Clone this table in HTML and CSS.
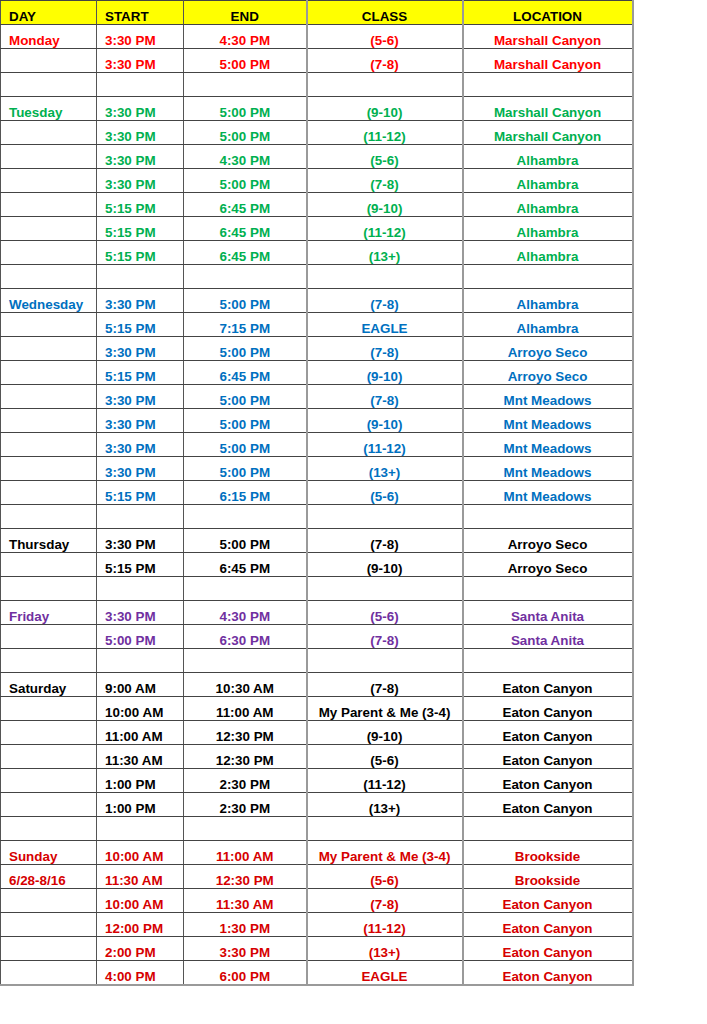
FILE: index.html
```html
<!DOCTYPE html>
<html>
<head>
<meta charset="utf-8">
<link rel="stylesheet" href="styles.css">
</head>
<body>
<table class="sched">
<colgroup><col class="c1"><col class="c2"><col class="c3"><col class="c4"><col class="c5"></colgroup>
<thead>
<tr class="head"><th class="l">DAY</th><th class="l">START</th><th>END</th><th>CLASS</th><th>LOCATION</th></tr>
</thead>
<tbody>
<tr class="red"><td class="l">Monday</td><td class="l">3:30 PM</td><td>4:30 PM</td><td>(5-6)</td><td>Marshall Canyon</td></tr>
<tr class="red"><td class="l"></td><td class="l">3:30 PM</td><td>5:00 PM</td><td>(7-8)</td><td>Marshall Canyon</td></tr>
<tr><td></td><td></td><td></td><td></td><td></td></tr>
<tr class="green"><td class="l">Tuesday</td><td class="l">3:30 PM</td><td>5:00 PM</td><td>(9-10)</td><td>Marshall Canyon</td></tr>
<tr class="green"><td class="l"></td><td class="l">3:30 PM</td><td>5:00 PM</td><td>(11-12)</td><td>Marshall Canyon</td></tr>
<tr class="green"><td class="l"></td><td class="l">3:30 PM</td><td>4:30 PM</td><td>(5-6)</td><td>Alhambra</td></tr>
<tr class="green"><td class="l"></td><td class="l">3:30 PM</td><td>5:00 PM</td><td>(7-8)</td><td>Alhambra</td></tr>
<tr class="green"><td class="l"></td><td class="l">5:15 PM</td><td>6:45 PM</td><td>(9-10)</td><td>Alhambra</td></tr>
<tr class="green"><td class="l"></td><td class="l">5:15 PM</td><td>6:45 PM</td><td>(11-12)</td><td>Alhambra</td></tr>
<tr class="green"><td class="l"></td><td class="l">5:15 PM</td><td>6:45 PM</td><td>(13+)</td><td>Alhambra</td></tr>
<tr><td></td><td></td><td></td><td></td><td></td></tr>
<tr class="blue"><td class="l">Wednesday</td><td class="l">3:30 PM</td><td>5:00 PM</td><td>(7-8)</td><td>Alhambra</td></tr>
<tr class="blue"><td class="l"></td><td class="l">5:15 PM</td><td>7:15 PM</td><td>EAGLE</td><td>Alhambra</td></tr>
<tr class="blue"><td class="l"></td><td class="l">3:30 PM</td><td>5:00 PM</td><td>(7-8)</td><td>Arroyo Seco</td></tr>
<tr class="blue"><td class="l"></td><td class="l">5:15 PM</td><td>6:45 PM</td><td>(9-10)</td><td>Arroyo Seco</td></tr>
<tr class="blue"><td class="l"></td><td class="l">3:30 PM</td><td>5:00 PM</td><td>(7-8)</td><td>Mnt Meadows</td></tr>
<tr class="blue"><td class="l"></td><td class="l">3:30 PM</td><td>5:00 PM</td><td>(9-10)</td><td>Mnt Meadows</td></tr>
<tr class="blue"><td class="l"></td><td class="l">3:30 PM</td><td>5:00 PM</td><td>(11-12)</td><td>Mnt Meadows</td></tr>
<tr class="blue"><td class="l"></td><td class="l">3:30 PM</td><td>5:00 PM</td><td>(13+)</td><td>Mnt Meadows</td></tr>
<tr class="blue"><td class="l"></td><td class="l">5:15 PM</td><td>6:15 PM</td><td>(5-6)</td><td>Mnt Meadows</td></tr>
<tr><td></td><td></td><td></td><td></td><td></td></tr>
<tr class="black"><td class="l">Thursday</td><td class="l">3:30 PM</td><td>5:00 PM</td><td>(7-8)</td><td>Arroyo Seco</td></tr>
<tr class="black"><td class="l"></td><td class="l">5:15 PM</td><td>6:45 PM</td><td>(9-10)</td><td>Arroyo Seco</td></tr>
<tr><td></td><td></td><td></td><td></td><td></td></tr>
<tr class="purple"><td class="l">Friday</td><td class="l">3:30 PM</td><td>4:30 PM</td><td>(5-6)</td><td>Santa Anita</td></tr>
<tr class="purple"><td class="l"></td><td class="l">5:00 PM</td><td>6:30 PM</td><td>(7-8)</td><td>Santa Anita</td></tr>
<tr><td></td><td></td><td></td><td></td><td></td></tr>
<tr class="black"><td class="l">Saturday</td><td class="l">9:00 AM</td><td>10:30 AM</td><td>(7-8)</td><td>Eaton Canyon</td></tr>
<tr class="black"><td class="l"></td><td class="l">10:00 AM</td><td>11:00 AM</td><td>My Parent &amp; Me (3-4)</td><td>Eaton Canyon</td></tr>
<tr class="black"><td class="l"></td><td class="l">11:00 AM</td><td>12:30 PM</td><td>(9-10)</td><td>Eaton Canyon</td></tr>
<tr class="black"><td class="l"></td><td class="l">11:30 AM</td><td>12:30 PM</td><td>(5-6)</td><td>Eaton Canyon</td></tr>
<tr class="black"><td class="l"></td><td class="l">1:00 PM</td><td>2:30 PM</td><td>(11-12)</td><td>Eaton Canyon</td></tr>
<tr class="black"><td class="l"></td><td class="l">1:00 PM</td><td>2:30 PM</td><td>(13+)</td><td>Eaton Canyon</td></tr>
<tr><td></td><td></td><td></td><td></td><td></td></tr>
<tr class="dred"><td class="l">Sunday</td><td class="l">10:00 AM</td><td>11:00 AM</td><td>My Parent &amp; Me (3-4)</td><td>Brookside</td></tr>
<tr class="dred"><td class="l">6/28-8/16</td><td class="l">11:30 AM</td><td>12:30 PM</td><td>(5-6)</td><td>Brookside</td></tr>
<tr class="dred"><td class="l"></td><td class="l">10:00 AM</td><td>11:30 AM</td><td>(7-8)</td><td>Eaton Canyon</td></tr>
<tr class="dred"><td class="l"></td><td class="l">12:00 PM</td><td>1:30 PM</td><td>(11-12)</td><td>Eaton Canyon</td></tr>
<tr class="dred"><td class="l"></td><td class="l">2:00 PM</td><td>3:30 PM</td><td>(13+)</td><td>Eaton Canyon</td></tr>
<tr class="dred"><td class="l"></td><td class="l">4:00 PM</td><td>6:00 PM</td><td>EAGLE</td><td>Eaton Canyon</td></tr>
</tbody>
</table>
</body>
</html>
```
FILE: styles.css
```css
html, body {
  margin: 0;
  padding: 0;
  background: #ffffff;
}
.sched {
  border-collapse: collapse;
  table-layout: fixed;
  width: 632px;
  font-family: "Liberation Sans", Arial, sans-serif;
  font-weight: bold;
  font-size: 13.4px;
  line-height: 15px;
}
.c1 { width: 96px; }
.c2 { width: 87px; }
.c3 { width: 123px; }
.c4 { width: 156px; }
.c5 { width: 170px; }
.sched th,
.sched td {
  height: 23px;
  padding: 0 8px 0 8px;
  vertical-align: bottom;
  text-align: center;
  white-space: nowrap;
  border-top: 1px solid #444444;
  border-bottom: 1px solid #444444;
  border-left: 1px solid #555555;
  border-right: 1px solid #555555;
  font-weight: bold;
}
.sched th:nth-child(3), .sched td:nth-child(3) { border-right: 2px solid #9a9a9a; }
.sched th:nth-child(4), .sched td:nth-child(4) { border-right: 2px solid #9a9a9a; }
.sched th:nth-child(5), .sched td:nth-child(5) { border-right: 2px solid #9a9a9a; }
.sched tbody tr:last-child td { border-bottom: 2px solid #9a9a9a; }
.sched .l { text-align: left; }
.head th { background: #ffff00; color: #000000; }
.red { color: #ff0000; }
.green { color: #00b050; }
.blue { color: #0070c0; }
.black { color: #000000; }
.purple { color: #7030a0; }
.dred { color: #d60000; }
```
